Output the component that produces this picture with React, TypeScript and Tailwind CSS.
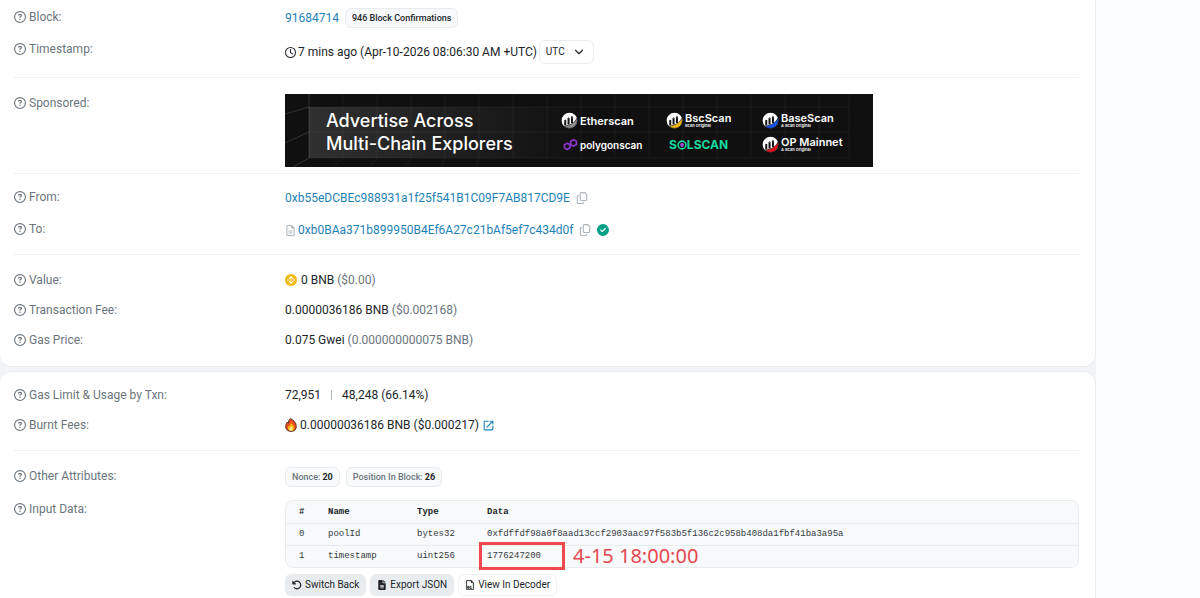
import React from "react";
import {
  FaArrowRotateLeft,
  FaCircleCheck,
  FaFileLines,
  FaRegCircleQuestion,
  FaRegClock,
  FaRegCopy,
  FaRegFileLines,
} from "react-icons/fa6";
import { BsFileEarmarkBinary } from "react-icons/bs";
import { MdOpenInNew } from "react-icons/md";
import { LuChevronDown } from "react-icons/lu";
import { SiBinance } from "react-icons/si";

type Param = {
  name: string;
  type: string;
  data: string;
  note?: string;
};

const params: Param[] = [
  {
    name: "poolId",
    type: "bytes32",
    data: "0xfdffdf98a0f8aad13ccf2903aac97f583b5f136c2c958b408da1fbf41ba3a95a",
  },
  {
    name: "timestamp",
    type: "uint256",
    data: "1776247200",
    note: "4-15 18:00:00",
  },
];

type RowProps = {
  label: string;
  center?: boolean;
  children: React.ReactNode;
};

const Row: React.FC<RowProps> = ({ label, center, children }: RowProps) => (
  <div className={center ? "flex items-center" : "flex items-start"}>
    <div className="flex w-[271px] shrink-0 items-center gap-[3px] leading-[18px] text-[#6c757d]">
      <FaRegCircleQuestion className="size-3" />
      {label}
    </div>
    <div className="min-w-0 flex-1">{children}</div>
  </div>
);

const CopyButton: React.FC<{ label: string }> = ({ label }) => (
  <button type="button" aria-label={label} className="text-[#adb5bd]">
    <FaRegCopy className="size-3" />
  </button>
);

const Attribute: React.FC<{ name: string; value: string }> = ({
  name,
  value,
}) => (
  <span className="flex h-5 items-center gap-[2px] rounded-md border border-[#e9ecef] bg-[#f8f9fa] px-[6px] text-[9px] font-medium text-[#6c757d]">
    {name} <span className="font-bold text-[#212529]">{value}</span>
  </span>
);

const ScanLogo: React.FC<{ accent: string }> = ({ accent }) => (
  <svg viewBox="0 0 18 18" className="size-[17px] shrink-0">
    <circle cx="9" cy="9" r="8.3" fill="#fff" />
    <path
      d="M3.500 14.600C9 14.600 14.500 11.500 17 6.300c1.400 5.600-2.300 11-8 11-2.300 0-4.200-1-5.500-2.700z"
      fill={accent}
      stroke="#111"
      strokeWidth=".7"
    />
    <path
      d="M4.500 13.800V9.400M8 13.200V7M11.600 11.600V5.600"
      stroke="#111"
      strokeWidth="2.100"
    />
    <path
      d="M3.500 9.400c0-1.200 2-1.200 2 0M7 7c0-1.200 2-1.200 2 0M10.600 5.600c0-1.200 2-1.200 2 0"
      fill="#111"
      stroke="#111"
      strokeWidth=".5"
    />
  </svg>
);

const PolygonLogo = () => (
  <svg viewBox="0 0 16 14" className="h-[13px] w-[15px] shrink-0">
    <g fill="none" stroke="#8a35c9" strokeWidth="1.900" strokeLinejoin="round">
      <path d="M7.500 7.600v3L4.500 12.300 1.500 10.600V7.300L4.500 5.600 7.500 7.300M8.200 6.600v-3L11.300 1.800l3.100 1.800v3.300L11.300 8.700 4.500 5.600" />
    </g>
  </svg>
);

const BannerGrid = () => (
  <svg
    viewBox="0 0 588 73"
    preserveAspectRatio="none"
    className="absolute inset-0 size-full"
  >
    <defs>
      <linearGradient id="panel" x1="0" x2="1">
        <stop offset="0" stopColor="#303030" />
        <stop offset="1" stopColor="#101010" />
      </linearGradient>
    </defs>
    <rect width="588" height="73" fill="#101010" />
    <rect x="24" y="13" width="270" height="51" fill="url(#panel)" />
    <path
      d="M24 13H564M24 38H564M24 64H564M58 0V64M92 0V64M126 0V64M160 0V64M194 0V64M228 0V64M262 0V64M296 0V64M330 0V64M364 0V64M398 0V64M432 0V64M466 0V64M500 0V64M534 0V64M564 0V64M58 64L48 73M92 64L84 73M126 64L120 73M160 64L156 73M194 64L191 73"
      stroke="#fff"
      strokeOpacity=".05"
      fill="none"
    />
    <path
      d="M24 0V64M24 13L0 20M24 38L0 49M24 64L8 73"
      stroke="#fff"
      strokeOpacity=".15"
      fill="none"
    />
  </svg>
);

const Explorer: React.FC<{ name: string; accent: string; sub?: string }> = ({
  name,
  accent,
  sub,
}) => (
  <div className="flex h-[17px] items-center gap-[2px]">
    <ScanLogo accent={accent} />
    <div className="text-[11px] leading-[10px] font-semibold whitespace-nowrap">
      {name}
      {sub && <div className="text-[4px] leading-[5px]">{sub}</div>}
    </div>
  </div>
);

const Banner = () => (
  <a
    href="#advertise"
    className="relative flex h-[73px] max-w-[588px] items-center overflow-hidden bg-[#101010] pt-[2px] pl-[41px] font-['Inter',sans-serif] text-white"
  >
    <BannerGrid />
    <div className="relative w-[235px] text-[18px] leading-[23px] font-medium">
      Advertise Across
      <br />
      Multi-Chain Explorers
    </div>
    <div className="relative grid grid-cols-[105px_96px_80px] gap-y-[7px] pt-[2px]">
      <Explorer name="Etherscan" accent="#8c8c8c" />
      <Explorer name="BscScan" accent="#f0b90b" sub="Scan Original" />
      <Explorer name="BaseScan" accent="#1652f0" sub="A Scan Original" />
      <div className="flex h-[17px] items-center gap-[2px] pl-[2px] text-[10px] font-semibold">
        <PolygonLogo />
        polygonscan
      </div>
      <div className="flex h-[17px] items-center pl-[3px] text-[12px] font-bold text-[#14d9a0]">
        S
        <svg viewBox="0 0 10 10" className="size-[10px]">
          <circle cx="5" cy="5" r="3.900" fill="#101010" stroke="#14d9a0" strokeWidth="1.600" />
          <circle cx="5" cy="5" r="1.900" fill="#a44be0" />
        </svg>
        LSCAN
      </div>
      <Explorer name="OP Mainnet" accent="#e8101c" sub="A Scan Original" />
    </div>
  </a>
);

const Flame = () => (
  <svg viewBox="0 0 12 14" className="h-[14px] w-3">
    <path d="M5.300.6c3 1.100 6 4.200 6 7.900 0 3.100-2.100 4.900-5.200 4.900S.7 11.500.7 8.600c0-2 .7-3.300 1.700-4.400l.9 1.100C3.500 3.300 3.900 1.600 5.300.6z" fill="#f4511e" stroke="#3b2020" strokeWidth=".9" />
    <path d="M6 5.200c1.700 1.400 3.200 2.800 3.200 4.700 0 1.900-1.400 2.900-3.100 2.900s-3.200-1-3.200-2.800C2.900 8.200 5 7.300 6 5.200z" fill="#ffb300" />
    <path d="M6 8.600c1 .7 1.700 1.400 1.700 2.300 0 1-.7 1.600-1.600 1.600s-1.700-.6-1.700-1.600S5.500 9.600 6 8.600z" fill="#fff3a0" />
  </svg>
);

const InputTable = () => (
  <div className="rounded-lg border border-[#e9ecef] bg-[#f8f9fb]">
    <table className="w-full table-fixed text-left font-['Liberation_Mono',monospace] text-[9px] text-[#343a40]">
      <thead>
        <tr className="h-[22px] text-[#212529]">
          <th className="w-[34px] pl-[13px]">#</th>
          <th className="w-[89px] pl-2">Name</th>
          <th className="w-[70px] pl-2">Type</th>
          <th className="pl-2">Data</th>
        </tr>
      </thead>
      <tbody>
        {params.map((param, index) => (
          <tr key={param.name} className="h-[22px] border-t border-[#e9ecef]">
            <td className="pl-[13px]">{index}</td>
            <td className="pl-2">{param.name}</td>
            <td className="pl-2">{param.type}</td>
            <td className="relative pl-2">
              {param.data}
              {param.note && (
                <div className="absolute -top-1 left-0 flex items-center gap-2">
                  <span className="h-7 w-[86px] border-3 border-[#f0484f]" />
                  <span className="font-['Noto_Sans',sans-serif] text-[20px] leading-6 text-[#e5484f]">
                    {param.note}
                  </span>
                </div>
              )}
            </td>
          </tr>
        ))}
      </tbody>
    </table>
  </div>
);

export default function App() {
  return (
    <div className="min-h-screen bg-[#fcfdfe] font-['Roboto',sans-serif] text-[12px] leading-5 text-[#212529]">
      <main className="mr-[104px] flex min-h-screen flex-col gap-1 bg-[#f3f4f8]">
        <section className="divide-y divide-[#f0f1f3] rounded-b-xl border-r border-b border-[#e9ecef] bg-white pr-4 pl-[14px]">
          <div className="flex flex-col gap-3 pt-2 pb-[13px]">
            <Row label="Block:">
              <div className="flex items-center gap-[6px]">
                <a href="#block" className="text-[#1e82b8]">
                  91684714
                </a>
                <span className="flex h-5 items-center rounded-md border border-[#e9ecef] bg-[#f8f9fa] px-[6px] text-[9px] font-medium">
                  946 Block Confirmations
                </span>
              </div>
            </Row>
            <Row label="Timestamp:">
              <div className="flex items-center gap-[2px]">
                <FaRegClock className="size-[11px]" />
                7 mins ago (Apr-10-2026 08:06:30 AM +UTC)
                <div className="relative">
                  <select
                    aria-label="Time zone"
                    className="block h-6 w-[55px] appearance-none rounded-md border border-[#e9ecef] bg-white pl-[6px] text-[10px]"
                  >
                    <option>UTC</option>
                  </select>
                  <LuChevronDown className="pointer-events-none absolute top-[5px] right-2 size-[14px]" />
                </div>
              </div>
            </Row>
          </div>

          <div className="pt-4 pb-[6px]">
            <Row label="Sponsored:">
              <Banner />
            </Row>
          </div>

          <div className="flex flex-col gap-3 py-[14px]">
            <Row label="From:">
              <div className="flex items-center gap-[6px]">
                <a href="#from" className="text-[#1e82b8]">
                  0xb55eDCBEc988931a1f25f541B1C09F7AB817CD9E
                </a>
                <CopyButton label="Copy sender" />
              </div>
            </Row>
            <Row label="To:">
              <div className="flex items-center gap-[6px]">
                <span className="flex items-center gap-[2px]">
                  <FaRegFileLines className="size-[11px] text-[#adb5bd]" />
                  <a href="#to" className="text-[#1e82b8]">
                    0xb0BAa371b899950B4Ef6A27c21bAf5ef7c434d0f
                  </a>
                </span>
                <CopyButton label="Copy recipient" />
                <FaCircleCheck className="size-3 text-[#00a186]" />
              </div>
            </Row>
          </div>

          <div className="flex flex-col gap-[10px] pt-[15px] pb-4">
            <Row label="Value:" center>
              <div className="flex items-center gap-1">
                <span className="flex size-3 items-center justify-center rounded-full bg-[#f0b90b] text-white">
                  <SiBinance className="size-2" />
                </span>
                <span>
                  0 BNB <span className="text-[#6c757d]">($0.00)</span>
                </span>
              </div>
            </Row>
            <Row label="Transaction Fee:" center>
              0.0000036186 BNB{" "}
              <span className="text-[#6c757d]">($0.002168)</span>
            </Row>
            <Row label="Gas Price:" center>
              0.075 Gwei{" "}
              <span className="text-[#6c757d]">(0.000000000075 BNB)</span>
            </Row>
          </div>
        </section>

        <section className="flex-1 divide-y divide-[#f0f1f3] rounded-t-xl border-t border-r border-[#e9ecef] bg-white pr-4 pl-[14px]">
          <div className="flex flex-col gap-[10px] pt-[13px] pb-[15px]">
            <Row label="Gas Limit & Usage by Txn:" center>
              <div className="flex items-center gap-[10px]">
                <span>72,951</span>
                <span className="h-[10px] w-px bg-[#adb5bd]" />
                <span>48,248 (66.14%)</span>
              </div>
            </Row>
            <Row label="Burnt Fees:" center>
              <div className="flex items-center gap-[3px]">
                <Flame />
                0.00000036186 BNB ($0.000217)
                <a href="#burnt" aria-label="Burnt fees details">
                  <MdOpenInNew className="size-[13px] text-[#1e82b8]" />
                </a>
              </div>
            </Row>
          </div>

          <div className="flex flex-col gap-[13px] pt-4">
            <Row label="Other Attributes:">
              <div className="flex gap-[6px]">
                <Attribute name="Nonce:" value="20" />
                <Attribute name="Position In Block:" value="26" />
              </div>
            </Row>
            <Row label="Input Data:">
              <InputTable />
              <div className="mt-[6px] flex gap-1 text-[10px]">
                <button
                  type="button"
                  className="flex h-[22px] items-center gap-[3px] rounded-md bg-[#e9ecef] px-[7px]"
                >
                  <FaArrowRotateLeft className="size-[10px]" />
                  Switch Back
                </button>
                <button
                  type="button"
                  className="flex h-[22px] items-center gap-[3px] rounded-md bg-[#e9ecef] px-[7px]"
                >
                  <FaFileLines className="size-[10px]" />
                  Export JSON
                </button>
                <button
                  type="button"
                  className="flex h-[22px] items-center gap-[3px] rounded-md border border-[#f0f1f3] bg-white px-[6px]"
                >
                  <BsFileEarmarkBinary className="size-[10px] stroke-current stroke-[0.5]" />
                  View In Decoder
                </button>
              </div>
            </Row>
          </div>
        </section>
      </main>
    </div>
  );
}
